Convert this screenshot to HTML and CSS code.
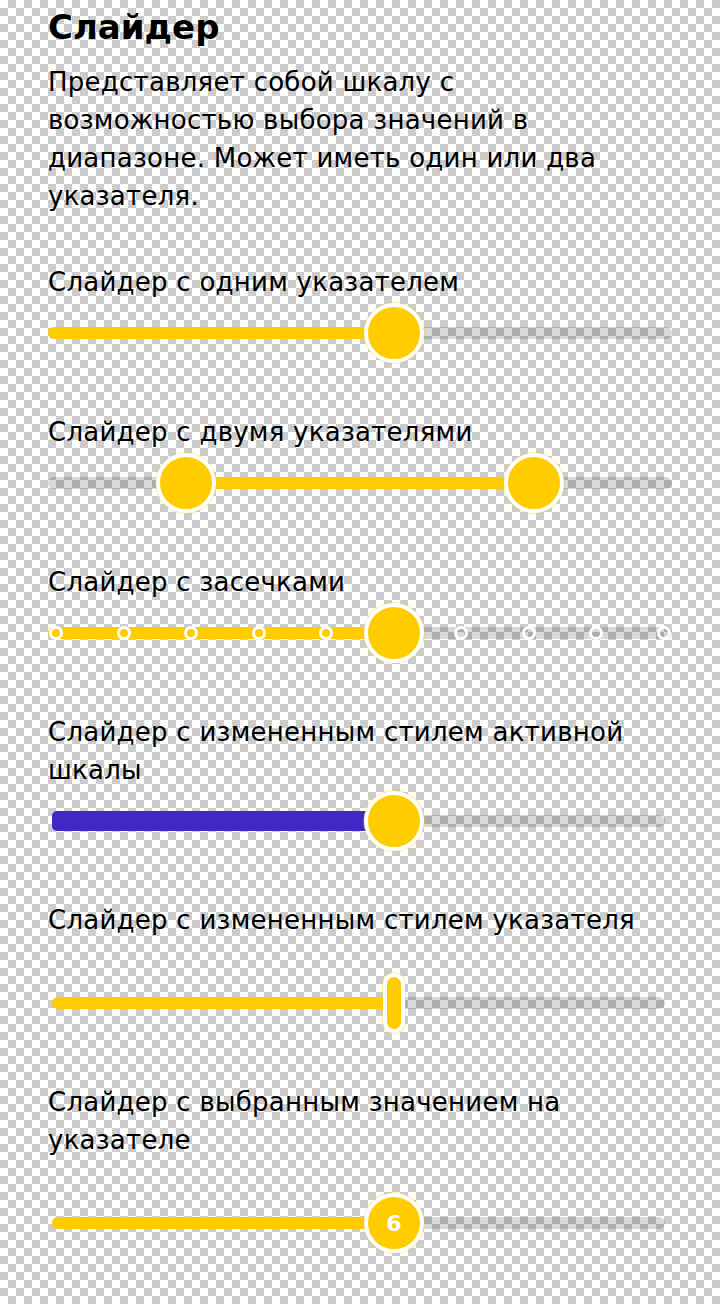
FILE: index.html
```html
<!DOCTYPE html>
<html lang="ru">
<head>
<meta charset="utf-8">
<title>Слайдер</title>
<link rel="stylesheet" href="styles.css">
</head>
<body>
<main class="page">
  <h1 class="title">Слайдер</h1>
  <p class="desc">Представляет собой шкалу с возможностью выбора значений в диапазоне. Может иметь один или два указателя.</p>

  <section class="demo">
    <h2 class="label">Слайдер с одним указателем</h2>
    <div class="slider">
      <div class="track"><div class="fill" style="left:0;width:346px"></div></div>
      <div class="thumb" style="left:316px"></div>
    </div>
  </section>

  <section class="demo">
    <h2 class="label">Слайдер с двумя указателями</h2>
    <div class="slider">
      <div class="track"><div class="fill" style="left:138px;width:348px"></div></div>
      <div class="thumb" style="left:108px"></div>
      <div class="thumb" style="left:456px"></div>
    </div>
  </section>

  <section class="demo">
    <h2 class="label">Слайдер с засечками</h2>
    <div class="slider">
      <div class="track track--ticks">
        <div class="fill" style="left:0;width:346px"></div>
        <span class="tick"></span><span class="tick"></span><span class="tick"></span><span class="tick"></span><span class="tick"></span>
        <span class="tick"></span><span class="tick"></span><span class="tick"></span><span class="tick"></span><span class="tick"></span>
      </div>
      <div class="thumb" style="left:316px"></div>
    </div>
  </section>

  <section class="demo">
    <h2 class="label">Слайдер с измененным стилем активной шкалы</h2>
    <div class="slider slider--inset">
      <div class="track"><div class="fill fill--purple" style="left:0;width:342px"></div></div>
      <div class="thumb" style="left:312px"></div>
    </div>
  </section>

  <section class="demo">
    <h2 class="label">Слайдер с измененным стилем указателя</h2>
    <div class="slider slider--inset slider--spaced">
      <div class="track"><div class="fill" style="left:0;width:342px"></div></div>
      <div class="thumb thumb--pill" style="left:331px"></div>
    </div>
  </section>

  <section class="demo">
    <h2 class="label">Слайдер с выбранным значением на указателе</h2>
    <div class="slider slider--inset slider--spaced">
      <div class="track"><div class="fill" style="left:0;width:342px"></div></div>
      <div class="thumb thumb--value" style="left:312px">6</div>
    </div>
  </section>
</main>
</body>
</html>
```

FILE: styles.css
```css
html, body {
  margin: 0;
  padding: 0;
}

body {
  width: 720px;
  min-height: 1304px;
  background-color: #fff;
  background-image: repeating-conic-gradient(#cccccc 0 25%, #ffffff 0 50%);
  background-size: 16px 16px;
  background-position: 0 0;
  font-family: "DejaVu Sans", "Noto Sans", sans-serif;
  color: #000;
}

.page {
  padding: 5px 48px 0 48px;
  display: flex;
  flex-direction: column;
}

.title {
  margin: 0;
  font-size: 34px;
  line-height: 44px;
  font-weight: 700;
}

.desc {
  max-width: 610px;
  margin: 14px 0 48px 0;
  font-size: 26px;
  line-height: 38px;
  letter-spacing: 0.25px;
  font-weight: 400;
}

.demo {
  margin: 0 0 48px 0;
}

.label {
  margin: 0;
  font-size: 26px;
  line-height: 38px;
  letter-spacing: 0.25px;
  font-weight: 400;
}

.slider {
  position: relative;
  height: 64px;
  display: flex;
  align-items: center;
}

.slider--inset {
  margin: 0 7px 0 4px;
}

.slider--spaced {
  margin-top: 32px;
}

.track {
  position: relative;
  width: 100%;
  height: 12px;
  border-radius: 6px;
  background: rgba(0, 0, 0, 0.15);
}

.track--ticks {
  display: flex;
  align-items: center;
  justify-content: space-between;
  padding: 0 1px;
  box-sizing: border-box;
}

.fill {
  position: absolute;
  top: 0;
  height: 12px;
  border-radius: 6px;
  background: #ffcc00;
}

.fill--purple {
  top: -4px;
  height: 20px;
  border-radius: 5px;
  background: #3f28c4;
}

.tick {
  position: relative;
  z-index: 1;
  width: 14px;
  height: 14px;
  box-sizing: border-box;
  border: 3px solid #fff;
  border-radius: 50%;
}

.thumb {
  position: absolute;
  top: 2px;
  z-index: 2;
  width: 60px;
  height: 60px;
  box-sizing: border-box;
  border: 4px solid #fff;
  border-radius: 50%;
  background: #ffcc00;
  box-shadow: 0 0 0 1px rgba(255, 204, 0, 0.35);
}

.thumb--pill {
  width: 22px;
  border-radius: 11px;
}

.thumb--value {
  display: flex;
  align-items: center;
  justify-content: center;
  color: #fff;
  font-size: 22px;
  font-weight: 700;
}
```
